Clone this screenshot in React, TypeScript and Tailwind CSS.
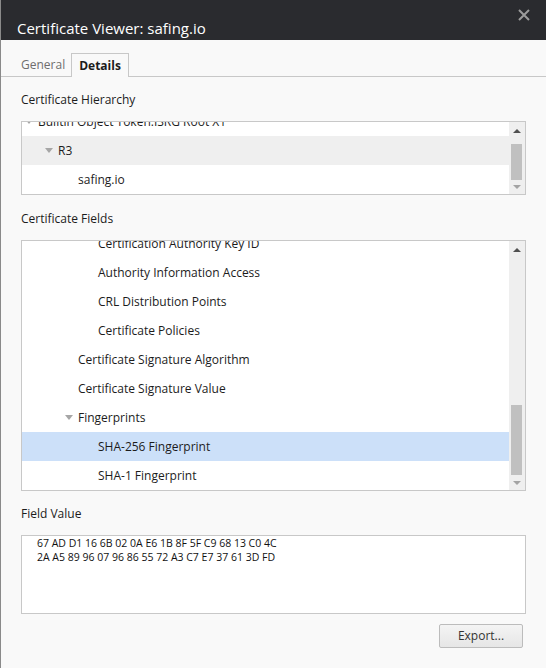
import React from "react";

const Tri = () => (
  <svg width="8" height="5" viewBox="0 0 8 5" className="mr-[5px]">
    <path d="M0 0 L8 0 L4 5 Z" fill="#a6a6a6" />
  </svg>
);

const ScrollBar = ({ thumbTop, thumbH }: { thumbTop: number; thumbH: number }) => (
  <div className="relative w-[16px] bg-[#efefef] shrink-0">
    <svg width="16" height="12" viewBox="0 0 16 12" className="absolute top-[3px] left-0">
      <path d="M4 8 L8 4 L12 8 Z" fill="#505050" />
    </svg>
    <div
      className="absolute left-[2px] w-[11px] bg-[#c0c0c0]"
      style={{ top: thumbTop, height: thumbH }}
    />
    <svg width="16" height="12" viewBox="0 0 16 12" className="absolute bottom-[1px] left-0">
      <path d="M4 4 L12 4 L8 8 Z" fill="#a3a3a3" />
    </svg>
  </div>
);

type Row = { text: string; indent: number; tri?: boolean; cls?: string };

const Rows = ({ rows, offset }: { rows: Row[]; offset: number }) => (
  <div className="flex-1 overflow-hidden relative">
    <div className="flex flex-col" style={{ marginTop: offset }}>
      {rows.map((r, i) => (
        <div
          key={i}
          className={`h-[29px] flex items-center shrink-0 ${r.cls ?? ""}`}
          style={{ paddingLeft: r.indent }}
        >
          {r.tri && <Tri />}
          <span>{r.text}</span>
        </div>
      ))}
    </div>
  </div>
);

export default function App() {
  const hier: Row[] = [
    { text: "Builtin Object Token:ISRG Root X1", indent: 3, tri: true },
    { text: "R3", indent: 23, tri: true, cls: "bg-[#efefef]" },
    { text: "safing.io", indent: 56 },
  ];
  const fields: Row[] = [
    { text: "Certification Authority Key ID", indent: 76 },
    { text: "Authority Information Access", indent: 76 },
    { text: "CRL Distribution Points", indent: 76 },
    { text: "Certificate Policies", indent: 76 },
    { text: "Certificate Signature Algorithm", indent: 56 },
    { text: "Certificate Signature Value", indent: 56 },
    { text: "Fingerprints", indent: 43, tri: true },
    { text: "SHA-256 Fingerprint", indent: 76, cls: "bg-[#cce0f9]" },
    { text: "SHA-1 Fingerprint", indent: 76 },
  ];
  return (
    <div
      className="w-[546px] h-[668px] bg-[#f9f9f9] flex flex-col text-[12px] text-[#1c1c1c] border-l border-[#8a8a8a] overflow-hidden"
      style={{ fontFamily: '"Open Sans", "Noto Sans", sans-serif' }}
    >
      <div className="h-[40px] bg-[#2a2b2f] flex items-end justify-between shrink-0 relative">
        <span className="text-white text-[15px] pl-[16px] pb-[4px] leading-none">
          Certificate Viewer: safing.io
        </span>
        <svg
          width="12"
          height="12"
          viewBox="0 0 12 12"
          className="absolute right-[16px] top-[9px]"
        >
          <path d="M1 1 L11 11 M11 1 L1 11" stroke="#9c9c9c" strokeWidth="2" />
        </svg>
      </div>
      <div className="flex items-end h-[37px] pl-[13px] border-b border-[#c8c8c8] shrink-0">
        <div className="h-[23px] pl-[7px] pr-[6px] flex items-center text-[#6e6e6e]">General</div>
        <div className="h-[24px] px-[7px] flex items-center font-bold border border-b-0 border-[#c8c8c8] bg-[#f9f9f9] -mb-px">
          Details
        </div>
      </div>
      <div className="px-[20px] flex flex-col">
        <div className="h-[44px] flex items-center pt-[2px]">Certificate Hierarchy</div>
        <div className="h-[74px] border border-[#c8c8c8] bg-white flex">
          <Rows rows={hier} offset={-15} />
          <ScrollBar thumbTop={22} thumbH={36} />
        </div>
        <div className="h-[45px] flex items-center pt-[2px]">Certificate Fields</div>
        <div className="h-[251px] border border-[#c8c8c8] bg-white flex">
          <Rows rows={fields} offset={-12} />
          <ScrollBar thumbTop={164} thumbH={70} />
        </div>
        <div className="h-[44px] flex items-center pt-[2px]">Field Value</div>
        <div className="h-[79px] border border-[#c8c8c8] bg-white pl-[15px] text-[10.5px] leading-[14px] text-[#111]">
          <div>67 AD D1 16 6B 02 0A E6 1B 8F 5F C9 68 13 C0 4C</div>
          <div>2A A5 89 96 07 96 86 55 72 A3 C7 E7 37 61 3D FD</div>
        </div>
        <div className="flex justify-end pt-[10px] pr-[3px]">
          <div className="h-[24px] w-[84px] border border-[#bcbcbc] rounded-[2px] bg-gradient-to-b from-[#f4f4f4] to-[#e6e6e6] flex items-center justify-center text-[#333]">
            Export...
          </div>
        </div>
      </div>
    </div>
  );
}
